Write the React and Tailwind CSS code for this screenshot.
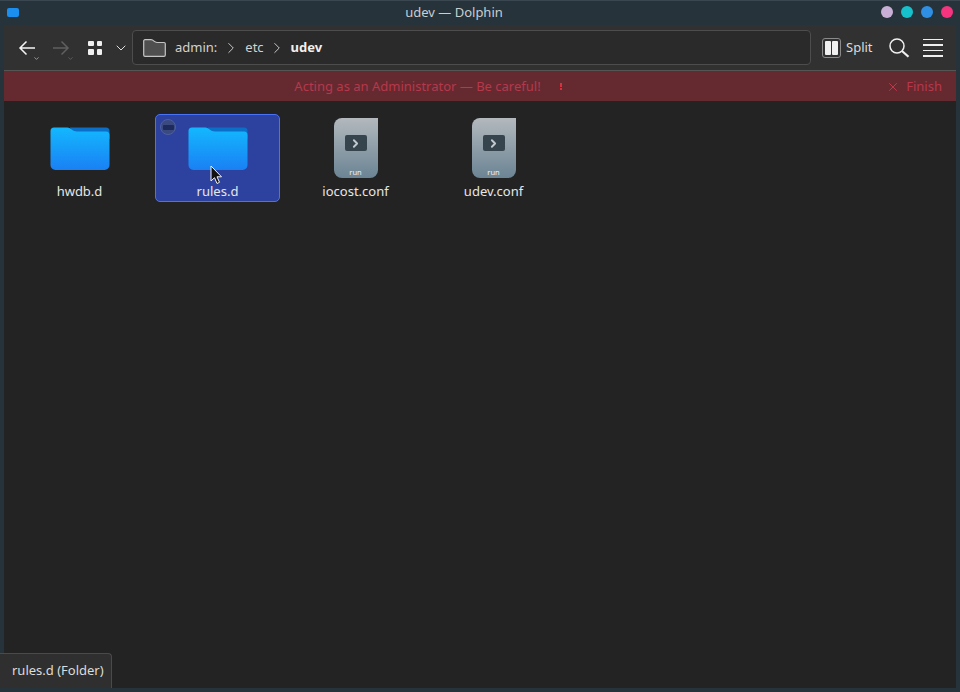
import { ChevronDown, ChevronRight, X } from "lucide-react";

const files = [
  { name: "hwdb.d", type: "folder" },
  { name: "rules.d", type: "folder", selected: true },
  { name: "iocost.conf", type: "script" },
  { name: "udev.conf", type: "script" },
];

const FolderIcon = ({ id }) => (
  <svg width="60" height="44" viewBox="0 0 60 44">
    <defs>
      <linearGradient id={id} x1="0" y1="0" x2="0" y2="1">
        <stop offset="0" stopColor="#13b8fe" />
        <stop offset="1" stopColor="#1a80f4" />
      </linearGradient>
    </defs>
    <path d="M20 .5 H56 a3.500 3.500 0 0 1 3.500 3.500 V12 H24 Z" fill="#0b6fc8" />
    <path
      d="M4 .5 H17 c2.500 0 3.500 1 5 2.300 c1.500 1.300 2.500 1.700 5 1.700 H56 a3.500 3.500 0 0 1 3.500 3.500 V38 a5 5 0 0 1 -5 5 H5.500 a5 5 0 0 1 -5 -5 V4 a3.500 3.500 0 0 1 3.500 -3.500 Z"
      fill={`url(#${id})`}
    />
  </svg>
);

const ScriptIcon = () => (
  <div className="flex h-[60px] w-[44px] flex-col items-center rounded-b-[8px] rounded-tl-[8px] bg-gradient-to-b from-[#b3b9bd] to-[#6b8494]">
    <div className="mt-[17px] flex h-[16px] w-[22px] items-center justify-center rounded-[2px] bg-[#36444e]">
      <ChevronRight size={13} strokeWidth={3.5} color="#c3c9cc" />
    </div>
    <span className="mt-[17px] text-[7.500px] leading-[9px] text-[#eef1f2]">run</span>
  </div>
);

const FileItem = ({ file, index }) => (
  <div
    className={`relative flex h-[88px] w-[125px] flex-col items-center rounded-[5px] border ${
      file.selected ? "border-[#4a72f5] bg-[#2d429f]" : "border-transparent"
    }`}
  >
    {file.selected && (
      <div className="absolute left-[4px] top-[4px] flex h-[16px] w-[16px] items-center justify-center rounded-full border border-[#4d5f9e] bg-[#3a4a80]">
        <div className="h-[5px] w-[11px] rounded-[1px] bg-[#1d2a5c]" />
      </div>
    )}
    <div className="flex h-[63px] items-end justify-center">
      {file.type === "folder" ? (
        <div className="mb-[7px]">
          <FolderIcon id={`folder-${index}`} />
        </div>
      ) : (
        <ScriptIcon />
      )}
    </div>
    <span className="mt-[4px] text-[13px] leading-[18px] text-[#e6e6e6]">{file.name}</span>
  </div>
);

const App = () => {
  return (
    <div className="relative flex h-[692px] w-[960px] flex-col overflow-hidden bg-[#26333b] font-['Noto_Sans',sans-serif] text-[13px]">
      {/* title bar */}
      <div className="relative flex h-[25px] items-center justify-center border-t border-[#3a4750] pr-[52px]">
        <div className="absolute left-[7px] top-[7px] h-[9px] w-[12px] rounded-[2px] bg-[#1a8ff0]" />
        <span className="text-[13px] text-[#c9ced1]">udev — Dolphin</span>
        <div className="absolute right-[7px] top-[5px] flex gap-[8px]">
          <div className="h-[12px] w-[12px] rounded-full bg-[#c9afd6]" />
          <div className="h-[12px] w-[12px] rounded-full bg-[#17c1cb]" />
          <div className="h-[12px] w-[12px] rounded-full bg-[#2f8fe3]" />
          <div className="h-[12px] w-[12px] rounded-full bg-[#f5347f]" />
        </div>
      </div>

      <div className="flex min-h-0 flex-1 flex-col px-[4px] pb-[4px]">
        {/* toolbar */}
        <div className="flex h-[46px] items-center border-b border-[#555555] bg-[#313131] text-[#e6e6e6]">
          <div className="relative ml-[14px] h-[16px] w-[18px]">
            <svg width="18" height="16" viewBox="0 0 18 16" fill="none" stroke="#f4f4f4" strokeWidth="1.500">
              <path d="M17 8 H2 M8.500 1.500 L2 8 L8.500 14.500" />
            </svg>
            <ChevronDown size={7} strokeWidth={2} className="absolute left-[15px] top-[15px]" color="#dddddd" />
          </div>
          <div className="relative ml-[16px] h-[16px] w-[18px]">
            <svg width="18" height="16" viewBox="0 0 18 16" fill="none" stroke="#5f5f5f" strokeWidth="1.500">
              <path d="M1 8 H16 M9.500 1.500 L16 8 L9.500 14.500" />
            </svg>
            <ChevronDown size={7} strokeWidth={2} className="absolute left-[15px] top-[15px]" color="#777777" />
          </div>
          <div className="ml-[18px] grid h-[14px] w-[14px] grid-cols-2 gap-[3px]">
            <div className="rounded-[1px] bg-[#f0f0f0]" />
            <div className="rounded-[1px] bg-[#f0f0f0]" />
            <div className="rounded-[1px] bg-[#f0f0f0]" />
            <div className="rounded-[1px] bg-[#f0f0f0]" />
          </div>
          <ChevronDown size={16} strokeWidth={1.500} className="ml-[11px]" color="#dddddd" />

          {/* location bar */}
          <div className="ml-[3px] flex h-[35px] w-[679px] items-center rounded-[4px] border border-[#4d4d4d] bg-[#2a2a2a] pl-[10px]">
            <svg width="23" height="18" viewBox="0 0 23 18" fill="none">
              <path
                d="M2 .7 H8 c1.500 0 2 .5 3 1.500 s1.500 1.300 3 1.300 H21 a1.300 1.300 0 0 1 1.300 1.300 V16 a1.300 1.300 0 0 1 -1.300 1.300 H2 A1.300 1.300 0 0 1 .7 16 V2 A1.300 1.300 0 0 1 2 .7 Z"
                fill="#4f4f4f"
                stroke="#c4c4c4"
                strokeWidth="1.200"
              />
            </svg>
            <span className="ml-[9px] text-[#d2d2d2]">admin:</span>
            <ChevronRight size={18} strokeWidth={1.300} className="ml-[5px]" color="#cccccc" />
            <span className="ml-[5px] text-[#d2d2d2]">etc</span>
            <ChevronRight size={18} strokeWidth={1.300} className="ml-[4px]" color="#cccccc" />
            <span className="ml-[5px] font-bold text-[#f0f0f0]">udev</span>
          </div>

          <div className="ml-[11px] flex h-[20px] w-[19px] items-center justify-center gap-[1px] rounded-[3px] border border-[#8a8a8a]">
            <div className="h-[14px] w-[6px] rounded-[1px] bg-[#f0f0f0]" />
            <div className="h-[14px] w-[6px] rounded-[1px] bg-[#f0f0f0]" />
          </div>
          <span className="ml-[5px] text-[#dcdcdc]">Split</span>
          <svg className="ml-[16px]" width="21" height="20" viewBox="0 0 21 20" fill="none" stroke="#f0f0f0">
            <circle cx="8" cy="8" r="7" strokeWidth="1.500" />
            <path d="M13 13 L19.500 18.800" strokeWidth="2.200" />
          </svg>
          <div className="ml-[13px] flex w-[20px] flex-col gap-[4px]">
            <div className="h-[1.500px] bg-[#eeeeee]" />
            <div className="h-[1.500px] bg-[#eeeeee]" />
            <div className="h-[1.500px] bg-[#eeeeee]" />
            <div className="h-[1.500px] bg-[#eeeeee]" />
          </div>
        </div>

        {/* admin warning */}
        <div className="relative flex h-[30px] items-center justify-center bg-[#652a2f] pr-[104px] pt-[1px] text-[#b5384d]">
          <span>Acting as an Administrator — Be careful!</span>
          <div className="ml-[19px] flex flex-col items-center gap-[1px]">
            <div className="h-[4px] w-[2px] bg-[#d8323f]" />
            <div className="h-[2px] w-[2px] bg-[#d8323f]" />
          </div>
          <div className="absolute right-[14px] flex items-center gap-[6px]">
            <X size={14} strokeWidth={1.600} color="#c23a4c" />
            <span>Finish</span>
          </div>
        </div>

        {/* file view */}
        <div className="flex min-h-0 flex-1 items-start gap-[13px] bg-[#232323] pl-[13px] pt-[13px]">
          {files.map((file, i) => (
            <FileItem key={file.name} file={file} index={i} />
          ))}
        </div>
      </div>

      {/* cursor */}
      <svg className="absolute left-[210px] top-[165px]" width="12" height="20" viewBox="0 0 12 20">
        <path d="M1 1 V16 L4.500 12.700 L7 18.500 L9.500 17.300 L7 11.800 H11.500 Z" fill="#111111" stroke="#f4f4f4" strokeWidth="1" />
      </svg>

      {/* status bar */}
      <div className="absolute bottom-[4px] left-0 flex h-[35px] w-[112px] items-center rounded-tr-[4px] border-r border-t border-[#4a4a4a] bg-[#2f2f2f] pl-[12px] text-[#dcdcdc]">
        rules.d (Folder)
      </div>
    </div>
  );
};

export default App;
